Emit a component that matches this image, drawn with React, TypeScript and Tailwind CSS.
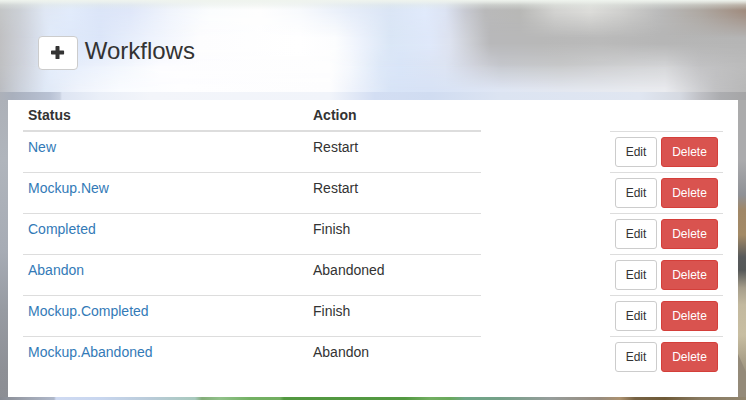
const rows = [
  { status: 'New', action: 'Restart' },
  { status: 'Mockup.New', action: 'Restart' },
  { status: 'Completed', action: 'Finish' },
  { status: 'Abandon', action: 'Abandoned' },
  { status: 'Mockup.Completed', action: 'Finish' },
  { status: 'Mockup.Abandoned', action: 'Abandon' },
];

function HeaderBackdrop() {
  return (
    <div className="absolute inset-0 -z-10" aria-hidden="true">
      <div className="absolute inset-0 bg-[linear-gradient(90deg,#bbbdc2_0px,#ccd2dc_20px,#e0e9f7_45px,#f0f4fc_80px,#fafcff_120px,#fefeff_180px,#fdfdfe_330px,#eaf0fb_360px,#d8e4f7_390px,#d8e3f6_430px,#dfe6f4_500px,#e3e7f0_560px,#e9ebf0_640px,#eaebef_665px,#d6d7da_690px,#c2c2c4_715px,#b8b8b8_746px)]" />
      <div className="absolute inset-0 bg-[linear-gradient(90deg,#bfc0c2_0px,#d0d4dd_25px,#e4edfb_50px,#e8effc_80px,#f2f6fd_120px,#fdfdff_160px,#fefefe_330px,#f5f8fd_350px,#dde8f8_380px,#d9e5f8_400px,#dde4f3_445px,#cfd1da_478px,#c6c8ce_500px,#c8c9ca_560px,#d2d3d5_640px,#d4d5d7_665px,#c2c2c4_700px,#bcbcbc_746px)] [mask-image:linear-gradient(#000_65px,transparent_90px)]" />
      <div className="absolute inset-0 bg-[linear-gradient(90deg,#c0c0c2_0px,#cfd3dc_25px,#e1ebfb_50px,#dce6f9_100px,#eef3fd_150px,#fdfdfe_200px,#ffffff_300px,#fcfdfe_335px,#edf2fc_360px,#dae6f6_390px,#dfe8fa_430px,#dde2ef_450px,#ccced4_470px,#b8b8ba_490px,#b8b8b8_540px,#bababa_600px,#b6b6b6_660px,#b5b5b5_746px)] [mask-image:linear-gradient(#000_44px,transparent_67px)]" />
      <div className="absolute inset-0 bg-[linear-gradient(90deg,#c3c5c6_0px,#ccd0d6_20px,#dfe7f4_45px,#e1ebfb_70px,#dbe5f8_100px,#dfe7f9_130px,#f0f4fc_170px,#fbfdfe_210px,#fefefe_260px,#f8fafd_300px,#e6edf9_350px,#dae5f5_390px,#e0eafb_425px,#dce3f3_445px,#c8cad2_465px,#b9b9ba_485px,#b8b8b6_520px,#d2d2d0_555px,#dcdcd9_590px,#d0d0ce_620px,#bababa_660px,#aea8a2_700px,#a08c7f_746px)] [mask-image:linear-gradient(#000_12px,transparent_38px)]" />
      <div className="absolute inset-x-0 top-0 h-2.5 bg-[linear-gradient(#eff4ee_0px,#edf2eccc_2px,#e4ebe466_5px,transparent_10px)]" />
    </div>
  );
}

function PhotoEdges() {
  return (
    <div className="absolute inset-0 -z-10" aria-hidden="true">
      <div className="absolute inset-x-0 top-0 h-2 bg-[linear-gradient(90deg,#adb1b9_0px,#a9b0bd_12px,#b0b8c8_30px,#b9c2d4_50px,#c8d0e0_60px,#dde4f2_62px,#eaeff8_100px,#f3f5fa_150px,#f1f4fa_330px,#d3def3_375px,#d0dcf1_430px,#dce4f2_500px,#e0e6f1_640px,#d5d9e1_680px,#bfc0c5_700px,#acadb0_720px,#a5a5a6_746px)]" />
      <div className="absolute bottom-0 left-0 top-2 w-2 bg-[linear-gradient(#adb1b8_0px,#b0b5bc_60px,#a7acb5_150px,#979ba2_210px,#8e9096_270px,#8c8e94_300px)]" />
      <div className="absolute bottom-0 right-0 top-2 w-2 bg-[linear-gradient(#ababab_0px,#ababad_60px,#8f9196_95px,#a08767_110px,#a38a66_135px,#585a5b_157px,#555858_170px,#a69e8b_188px,#c3b99f_205px,#c8bea2_235px,#aaa089_260px,#82796b_300px)]">
        <svg className="absolute bottom-0 right-0" width="8" height="80" viewBox="0 0 8 80">
          <path d="M0 34 8 52V80H0Z" fill="#948a79" />
        </svg>
      </div>
      <div className="absolute inset-x-0 bottom-0 h-[3px] bg-[linear-gradient(90deg,#888b93_0px,#a0a6b3_30px,#afb8ca_54px,#cfdaf2_56px,#c8d6ef_100px,#b9cbd9_150px,#a8c9bd_195px,#83ad79_202px,#91c18a_220px,#73b163_250px,#72ae60_280px,#529840_284px,#539941_405px,#72ae61_430px,#69a95b_450px,#6fa688_465px,#74a188_500px,#969d9b_550px,#988c7e_600px,#ac9270_620px,#766244_635px,#6e5a37_665px,#887a61_700px,#92866f_746px)]" />
    </div>
  );
}

function PlusIcon() {
  return (
    <svg width="14" height="14" viewBox="0 0 14 14" fill="#333" aria-hidden="true">
      <path d="M5.200 0h2.600q.7 0 .7.700V4.500h3.900q.7 0 .7.700v2.600q0 .7-.7.700H8.500v3.900q0 .7-.7.700H5.200q-.7 0-.7-.7V8.500H.7Q0 8.500 0 7.800V5.200Q0 4.500.7 4.500h3.800V.7Q4.500 0 5.200 0Z" />
    </svg>
  );
}

export default function App() {
  return (
    <div className="h-[400px] w-[746px] overflow-hidden font-['Liberation_Sans',Arial,sans-serif] text-sm leading-5 text-[#333]">
      <header className="relative isolate flex h-[92px] items-start pl-[38px] pt-9">
        <HeaderBackdrop />
        <button className="flex h-[34px] w-10 items-center justify-center rounded border border-[#ccc] bg-white" aria-label="Add workflow">
          <PlusIcon />
        </button>
        <h1 className="ml-[6.67px] text-2xl leading-[30px]">Workflows</h1>
      </header>
      <main className="relative isolate h-[308px] px-2 pb-[3px] pt-2">
        <PhotoEdges />
        <section className="flex h-full items-start justify-between bg-white px-[15px]">
          <div className="w-[458px]">
            <div className="grid h-8 grid-cols-[285px_1fr] border-b-2 border-[#ddd] pt-[5px] font-bold">
              <span className="pl-[5px]">Status</span>
              <span className="pl-[5px]">Action</span>
            </div>
            {rows.map((row, i) => (
              <div
                key={row.status}
                className={`grid grid-cols-[285px_1fr] ${i === 0 ? 'h-10 pt-[5px]' : 'h-[41px] border-t border-[#ddd] pt-[5px]'}`}
              >
                <a className="pl-[5px] text-[#337ab7]">{row.status}</a>
                <span className="pl-[5px]">{row.action}</span>
              </div>
            ))}
          </div>
          <div className="w-[113px] pt-[31px]">
            {rows.map((row) => (
              <div key={row.status} className="flex h-[41px] gap-1 border-t border-[#ddd] p-[5px]">
                <button className="h-[30px] w-[42px] rounded-[3px] border border-[#ccc] bg-white text-xs leading-[18px]">Edit</button>
                <button className="h-[30px] w-[57px] rounded-[3px] border border-[#d43f3a] bg-[#d9534f] text-xs leading-[18px] text-white">Delete</button>
              </div>
            ))}
          </div>
        </section>
      </main>
    </div>
  );
}
